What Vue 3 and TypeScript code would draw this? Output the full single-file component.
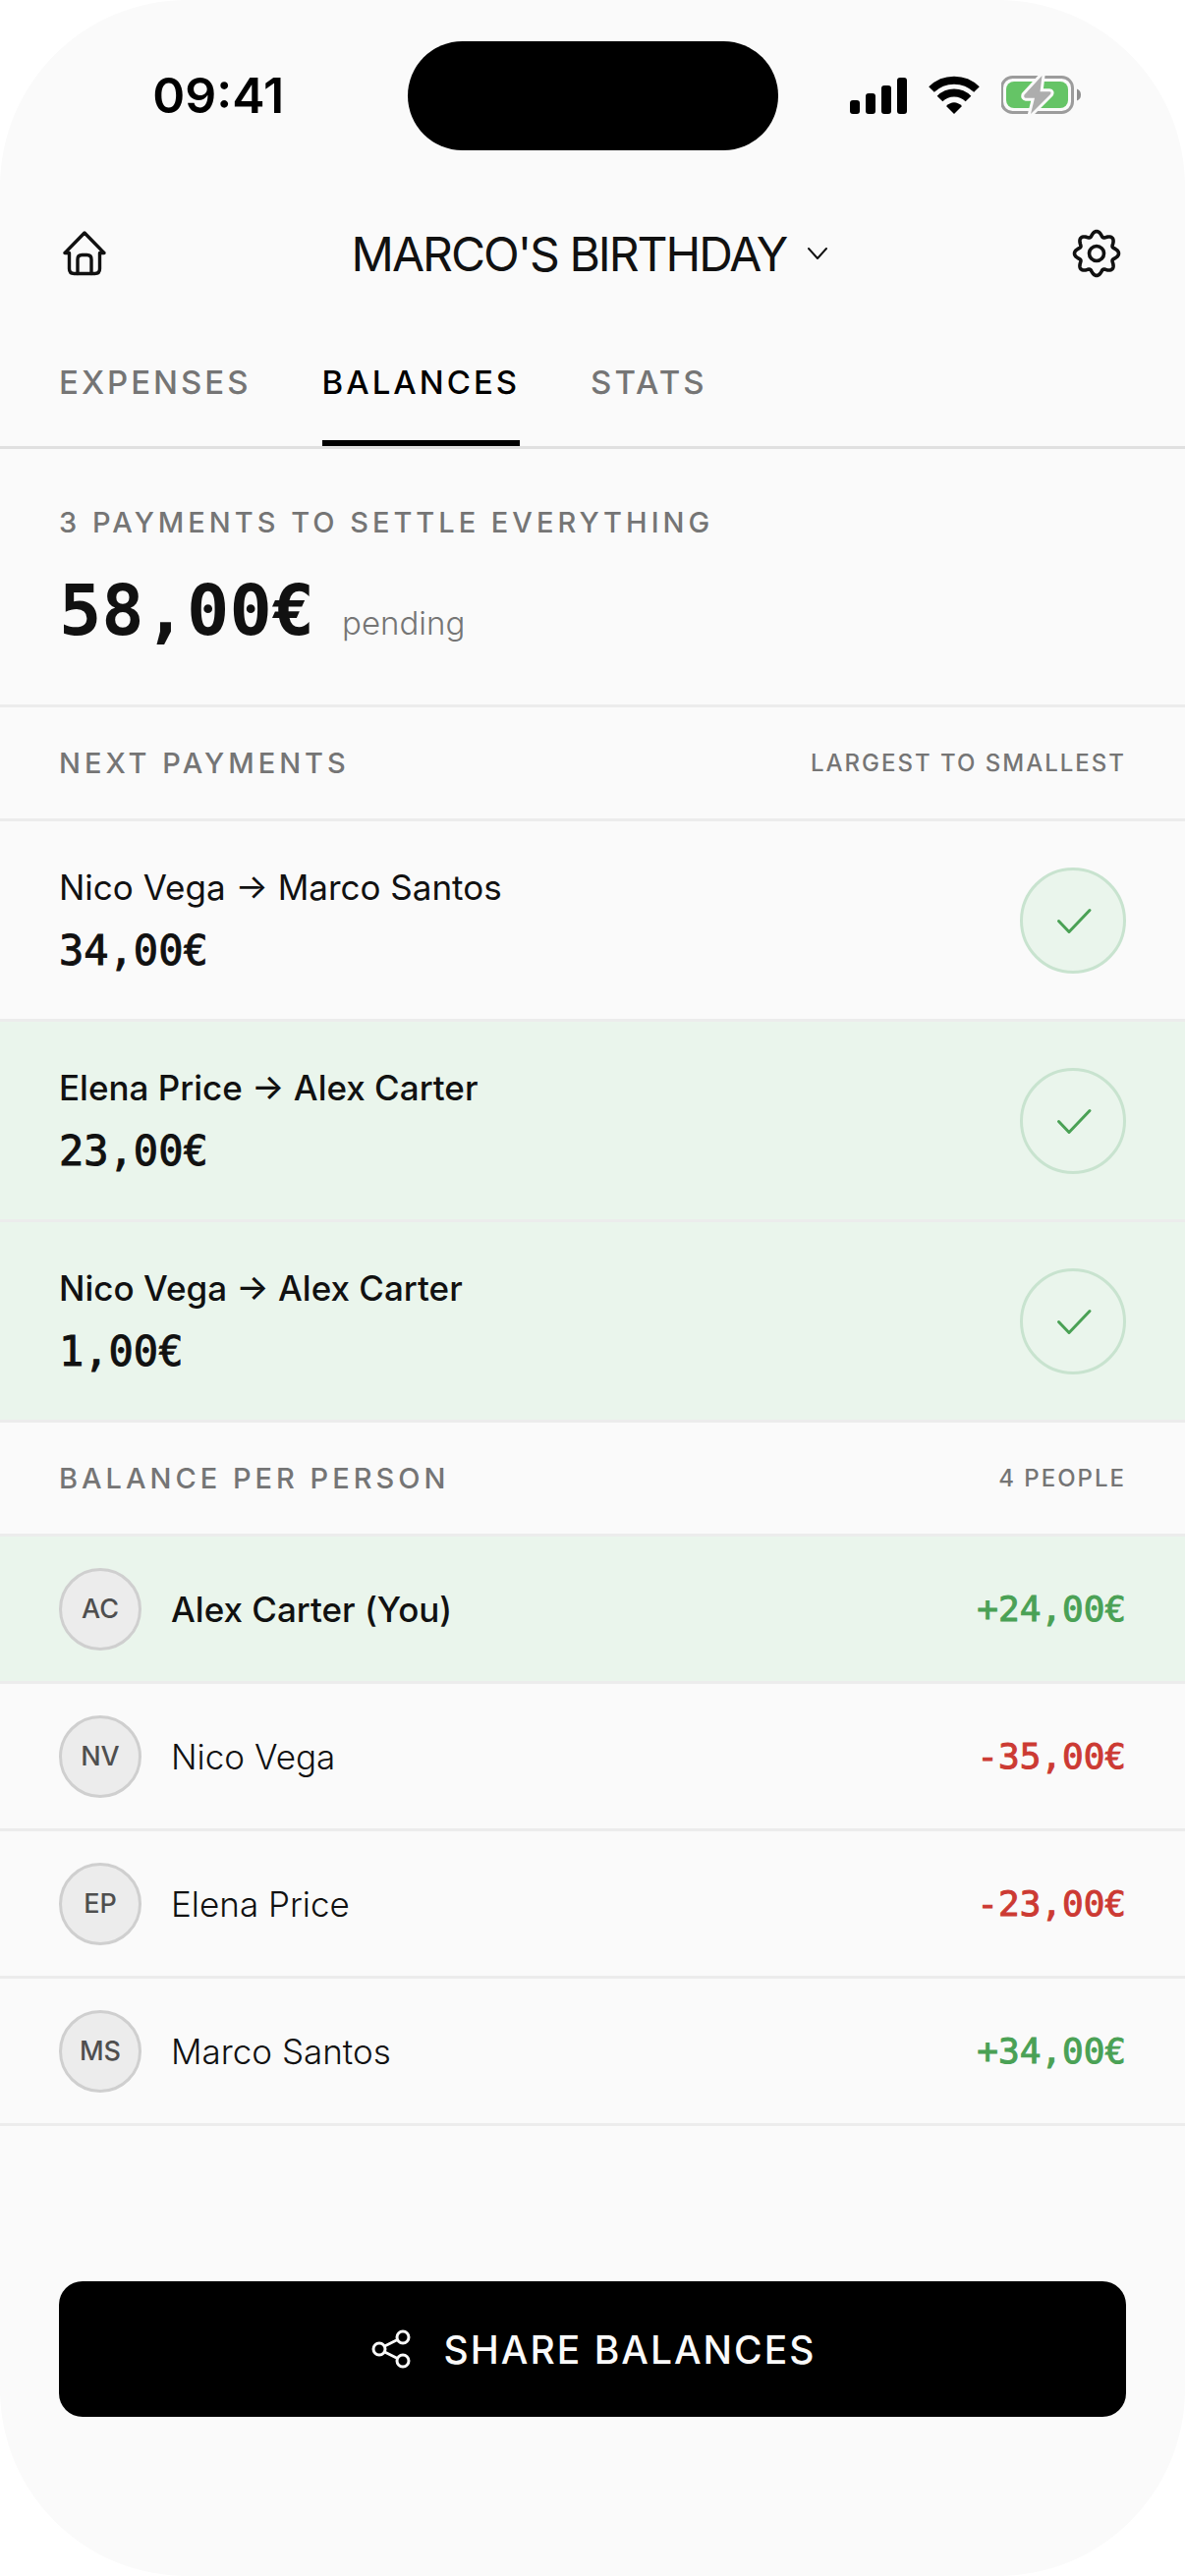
<script setup lang="ts">
import { ref } from 'vue'

interface Payment {
  from: string
  to: string
  amount: string
  mine: boolean
}

interface Person {
  initials: string
  name: string
  balance: string
  you?: boolean
}

const tabs = ['EXPENSES', 'BALANCES', 'STATS']
const activeTab = ref('BALANCES')

const payments: Payment[] = [
  { from: 'Nico Vega', to: 'Marco Santos', amount: '34,00€', mine: false },
  { from: 'Elena Price', to: 'Alex Carter', amount: '23,00€', mine: true },
  { from: 'Nico Vega', to: 'Alex Carter', amount: '1,00€', mine: true },
]

const people: Person[] = [
  { initials: 'AC', name: 'Alex Carter (You)', balance: '+24,00€', you: true },
  { initials: 'NV', name: 'Nico Vega', balance: '-35,00€' },
  { initials: 'EP', name: 'Elena Price', balance: '-23,00€' },
  { initials: 'MS', name: 'Marco Santos', balance: '+34,00€' },
]

// Eight-lobed gear outline around the centre of a 52px box
const gearPath = (() => {
  const points: string[] = []
  for (let i = 0; i < 160; i++) {
    const t = (i / 160) * Math.PI * 2
    const r = 20 + 2.5 * Math.cos(8 * t)
    const a = t + 0.02 * Math.sin(8 * t)
    points.push(`${(26 + r * Math.cos(a)).toFixed(2)} ${(26 + r * Math.sin(a)).toFixed(2)}`)
  }
  return `M${points.join('L')}Z`
})()
</script>

<template>
  <div class="screen">
    <div class="status">
      <div class="status-side"><span class="time">09:41</span></div>
      <div class="island"></div>
      <div class="status-side status-icons">
        <svg width="58" height="38" viewBox="0 0 58 38" aria-label="Signal">
          <rect x="0" y="24" width="10" height="14" rx="3" />
          <rect x="16" y="17" width="10" height="21" rx="3" />
          <rect x="32" y="9" width="10" height="29" rx="3" />
          <rect x="48" y="1" width="10" height="37" rx="3" />
        </svg>
        <svg width="54" height="40" viewBox="0 0 54 40" aria-label="Wi-Fi">
          <g fill="none" stroke="#000" stroke-width="8">
            <path d="M4 14A33 33 0 0 1 50 14" />
            <path d="M12.5 23.5A20.5 20.5 0 0 1 41.5 23.5" />
          </g>
          <path d="M19 31Q27 23.500 35 31L27 39Z" />
        </svg>
        <svg width="84" height="44" viewBox="2 0 84 44" aria-label="Battery charging">
          <rect x="2.500" y="3.500" width="72" height="36" rx="11" fill="none" stroke="#9c9c9c" stroke-width="3" />
          <rect x="7" y="8" width="63" height="27" rx="8" fill="#65c466" />
          <path d="M79 15.500Q83 17 83 21.500T79 27.500Z" fill="#8e8e8e" />
          <path
            d="M43.500 2L25.500 21.500Q24.500 24.500 27 24.700H36L32 41L52 21Q53.500 18.500 51 18.300H41.500Z"
            fill="#adadad" stroke="#fafafa" stroke-width="6" stroke-linejoin="round" paint-order="stroke"
          />
        </svg>
      </div>
    </div>

    <header class="header">
      <button class="icon-btn" aria-label="Home">
        <svg width="52" height="52" viewBox="0 2 52 52" stroke-width="3.400">
          <path d="M26 6L6 26.500H10.500V42.500Q10.500 47.500 15.500 47.500H36.500Q41.500 47.500 41.500 42.500V26.500H46Z" />
          <path d="M19 47.500V33Q19 28.500 23.500 28.500H28.500Q33 28.500 33 33V47.500" />
        </svg>
      </button>
      <button class="title">
        <span>MARCO'S BIRTHDAY</span>
        <svg width="24" height="24" viewBox="0 0 24 24" stroke-width="2"><path d="M3 6L12 16L21 6" /></svg>
      </button>
      <button class="icon-btn" aria-label="Settings">
        <svg width="52" height="52" viewBox="0 1 52 52" stroke-width="3.600">
          <path :d="gearPath" />
          <circle cx="26" cy="26" r="7.500" />
        </svg>
      </button>
    </header>

    <nav class="tabs">
      <button
        v-for="tab in tabs"
        :key="tab"
        class="tab"
        :class="{ active: tab === activeTab }"
        @click="activeTab = tab"
      >{{ tab }}</button>
    </nav>

    <main class="content">
      <section class="summary">
        <h2 class="label">3 PAYMENTS TO SETTLE EVERYTHING</h2>
        <p class="total">
          <strong>58,00€</strong>
          <span>pending</span>
        </p>
      </section>

      <section>
        <div class="section-head">
          <h2 class="label">NEXT PAYMENTS</h2>
          <span class="note">LARGEST TO SMALLEST</span>
        </div>
        <ul class="list">
          <li v-for="p in payments" :key="p.from + p.to" class="payment" :class="{ highlighted: p.mine }">
            <div>
              <div class="payment-names">{{ p.from }} → {{ p.to }}</div>
              <div class="payment-amount">{{ p.amount }}</div>
            </div>
            <button class="check" :aria-label="`Mark ${p.from} to ${p.to} as paid`">
              <svg width="48" height="48" viewBox="0 0 48 48"><path d="M9.500 24.500L20 35.500L41 13.500" /></svg>
            </button>
          </li>
        </ul>
      </section>

      <section>
        <div class="section-head">
          <h2 class="label">BALANCE PER PERSON</h2>
          <span class="note">4 PEOPLE</span>
        </div>
        <ul class="list">
          <li v-for="p in people" :key="p.initials" class="person" :class="{ highlighted: p.you }">
            <span class="avatar">{{ p.initials }}</span>
            <span class="person-name">{{ p.name }}</span>
            <span class="balance" :class="p.balance.startsWith('+') ? 'positive' : 'negative'">{{ p.balance }}</span>
          </li>
        </ul>
      </section>
    </main>

    <footer class="footer">
      <button class="share">
        <svg width="44" height="44" viewBox="0 0 44 44">
          <circle cx="10" cy="22" r="6" />
          <circle cx="34" cy="10" r="6" />
          <circle cx="34" cy="34" r="6" />
          <path d="M15.500 19L28.500 12.500M15.500 25L28.500 31.500" />
        </svg>
        <span>SHARE BALANCES</span>
      </button>
    </footer>
  </div>
</template>

<style>
body {
  background: #fff;
}
</style>

<style scoped>
.screen,
.screen * {
  box-sizing: border-box;
}

.screen {
  display: flex;
  flex-direction: column;
  min-height: 100vh;
  background: #fafafa;
  border-radius: 190px;
  color: #111;
  font-family: Inter, "Liberation Sans", sans-serif;
}

button {
  padding: 0;
  border: 0;
  background: none;
  color: inherit;
  font: inherit;
  cursor: pointer;
}

h2,
p,
ul {
  margin: 0;
  padding: 0;
}

svg {
  display: block;
  flex: none;
}

.status {
  display: grid;
  grid-template-columns: 1fr 377px 1fr;
  align-items: center;
  height: 194px;
  padding: 0 30px;
  color: #000;
}

.status-side {
  display: flex;
  justify-content: center;
  align-items: center;
}

.time {
  font-size: 50px;
  font-weight: 600;
  line-height: 60px;
}

.island {
  height: 111px;
  border-radius: 56px;
  background: #000;
}

.status-icons {
  gap: 21px;
}

.header {
  display: flex;
  justify-content: space-between;
  align-items: center;
  height: 130px;
  padding: 0 64px 0 60px;
}

.icon-btn svg,
.title svg {
  fill: none;
  stroke: #111;
  stroke-linecap: round;
  stroke-linejoin: round;
}

.title {
  display: flex;
  align-items: center;
  gap: 20px;
  font-size: 48px;
  line-height: 60px;
  letter-spacing: -2px;
}

.tabs {
  display: flex;
  gap: 72px;
  height: 133px;
  padding: 0 60px;
  border-bottom: 3px solid #e0e0e0;
}

.tab {
  border-top: 6px solid transparent;
  border-bottom: 6px solid transparent;
  color: #757575;
  font-size: 33px;
  font-weight: 500;
  letter-spacing: 3px;
}

.tab.active {
  border-bottom-color: #000;
  color: #000;
}

.content {
  flex: 1;
}

.label {
  color: #757575;
  font-size: 29px;
  font-weight: 500;
  line-height: 42px;
  letter-spacing: 4px;
}

.summary {
  padding: 54px 60px 39px;
  border-bottom: 3px solid #ececec;
}

.total {
  display: flex;
  align-items: baseline;
  gap: 28px;
  margin-top: 24px;
  line-height: 88px;
}

.total strong,
.payment-amount,
.balance {
  font-family: "DejaVu Sans Mono", monospace;
}

/* The mono face has no medium weight, so a thin outline thickens the regular one */
.payment-amount,
.balance {
  -webkit-text-stroke: 1px currentColor;
}

.total strong {
  font-size: 72px;
  font-weight: 700;
}

.total span {
  color: #757575;
  font-size: 33px;
  font-weight: 300;
}

.section-head {
  display: flex;
  justify-content: space-between;
  align-items: center;
  height: 116px;
  padding: 0 60px;
  border-bottom: 3px solid #ececec;
}

.note {
  color: #757575;
  font-size: 24px;
  font-weight: 500;
  letter-spacing: 2px;
}

.list {
  list-style: none;
}

.payment,
.person {
  display: flex;
  align-items: center;
  padding: 0 60px;
  border-bottom: 3px solid #ececec;
}

.payment {
  justify-content: space-between;
  min-height: 204px;
}

.highlighted {
  background: #eaf5ec;
}

.payment-names {
  font-size: 35px;
  line-height: 60px;
}

.highlighted .payment-names,
.highlighted .person-name {
  font-weight: 500;
}

.payment-amount {
  margin-top: 2px;
  font-size: 42px;
  line-height: 66px;
}

.check {
  display: flex;
  justify-content: center;
  align-items: center;
  width: 108px;
  height: 108px;
  border: 3px solid #c8e3cf;
  border-radius: 50%;
  background: #eaf5ec;
}

.check svg {
  fill: none;
  stroke: #4aa155;
  stroke-width: 3;
  stroke-linecap: round;
  stroke-linejoin: round;
}

.person {
  gap: 30px;
  min-height: 150px;
}

.avatar {
  display: flex;
  justify-content: center;
  align-items: center;
  width: 84px;
  height: 84px;
  border: 3px solid #cfcfcf;
  border-radius: 50%;
  background: #ececec;
  color: #4f4f4f;
  font-size: 27px;
  font-weight: 500;
}

.person-name {
  flex: 1;
  font-size: 35px;
  font-weight: 300;
}

.balance {
  font-size: 36px;
}

.positive {
  color: #4aa155;
}

.negative {
  color: #cc3a33;
}

.footer {
  padding: 48px 60px 162px;
}

.share {
  display: flex;
  justify-content: center;
  align-items: center;
  gap: 32px;
  width: 100%;
  height: 138px;
  border-radius: 24px;
  background: #000;
  color: #fafafa;
  font-size: 39px;
  font-weight: 500;
  letter-spacing: 2px;
}

.share svg {
  fill: none;
  stroke: #fafafa;
  stroke-width: 3;
}
</style>
